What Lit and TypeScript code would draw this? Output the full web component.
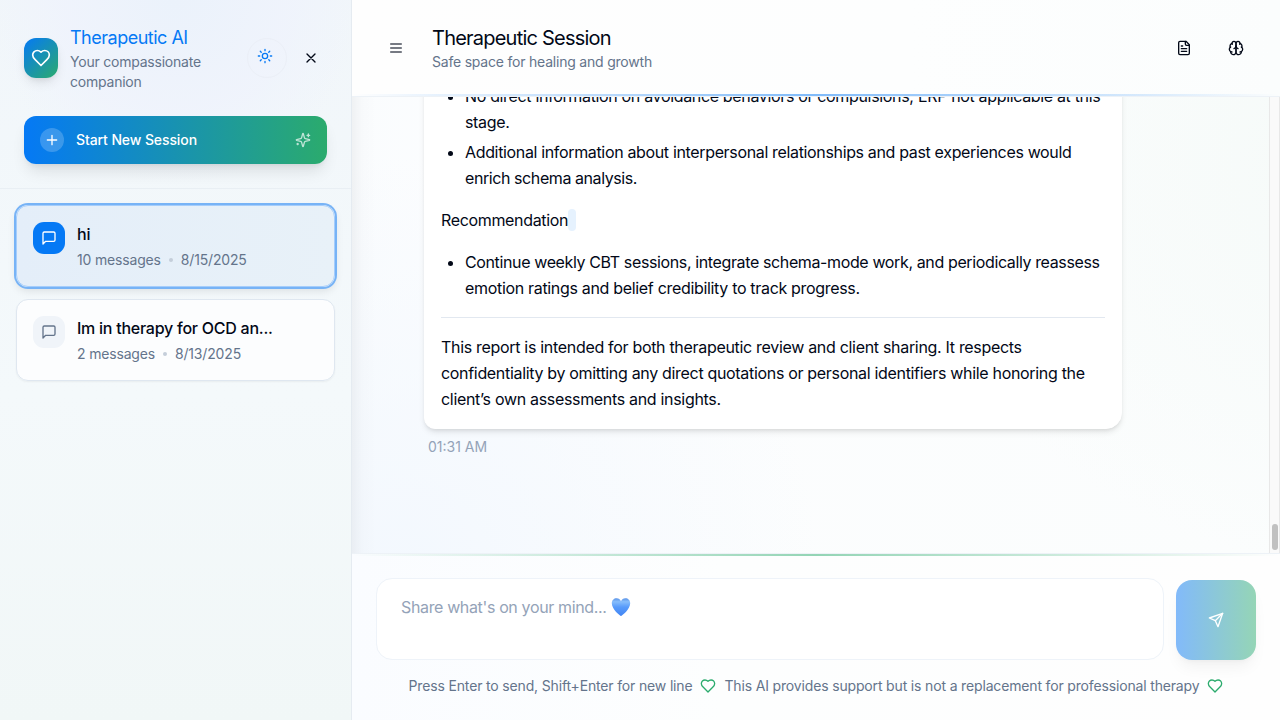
import { LitElement, html, css, svg } from "lit";
import { customElement, property } from "lit/decorators.js";
import { styleMap } from "lit/directives/style-map.js";

const ICONS: Record<string, unknown> = {
  heart: svg`<path d="M19 14c1.49-1.46 3-3.21 3-5.5A5.5 5.5 0 0 0 16.5 3c-1.76 0-3 .5-4.5 2-1.5-1.5-2.74-2-4.5-2A5.5 5.5 0 0 0 2 8.5c0 2.3 1.5 4.05 3 5.5l7 7Z"/>`,
  sun: svg`<circle cx="12" cy="12" r="4"/><path d="M12 2v2M12 20v2M4.93 4.93l1.41 1.41M17.66 17.66l1.41 1.41M2 12h2M20 12h2M6.34 17.66l-1.41 1.41M19.07 4.93l-1.41 1.41"/>`,
  x: svg`<path d="M18 6 6 18M6 6l12 12"/>`,
  plus: svg`<path d="M5 12h14M12 5v14"/>`,
  sparkles: svg`<path d="M9.937 15.5A2 2 0 0 0 8.5 14.063l-6.135-1.582a.5.5 0 0 1 0-.962L8.5 9.936A2 2 0 0 0 9.937 8.5l1.582-6.135a.5.5 0 0 1 .963 0L14.063 8.5A2 2 0 0 0 15.5 9.937l6.135 1.581a.5.5 0 0 1 0 .964L15.5 14.063a2 2 0 0 0-1.437 1.437l-1.582 6.135a.5.5 0 0 1-.963 0z"/><path d="M20 3v4M22 5h-4M4 17v2M5 18H3"/>`,
  message: svg`<path d="M21 15a2 2 0 0 1-2 2H7l-4 4V5a2 2 0 0 1 2-2h14a2 2 0 0 1 2 2z"/>`,
  menu: svg`<path d="M4 12h16M4 6h16M4 18h16"/>`,
  file: svg`<path d="M15 2H6a2 2 0 0 0-2 2v16a2 2 0 0 0 2 2h12a2 2 0 0 0 2-2V7Z"/><path d="M14 2v4a2 2 0 0 0 2 2h4M10 9H8M16 13H8M16 17H8"/>`,
  brain: svg`<path d="M12 5a3 3 0 1 0-5.997.125 4 4 0 0 0-2.526 5.77 4 4 0 0 0 .556 6.588A4 4 0 1 0 12 18Z"/><path d="M12 5a3 3 0 1 1 5.997.125 4 4 0 0 1 2.526 5.77 4 4 0 0 1-.556 6.588A4 4 0 1 1 12 18Z"/><path d="M15 13a4.5 4.5 0 0 1-3-4 4.5 4.5 0 0 1-3 4"/><path d="M17.599 6.5a3 3 0 0 0 .399-1.375M6.003 5.125A3 3 0 0 0 6.401 6.5M3.477 10.896a4 4 0 0 1 .585-.396M19.938 10.5a4 4 0 0 1 .585.396M6 18a4 4 0 0 1-1.967-.516M19.967 17.484A4 4 0 0 1 18 18"/>`,
  send: svg`<path d="m22 2-7 20-4-9-9-4Z"/><path d="M22 2 11 13"/>`,
};

@customElement("ui-icon")
class UiIcon extends LitElement {
  @property() name = "";
  static styles = css`
    :host { display: block; flex: none; width: 16px; height: 16px; }
    svg { display: block; width: 100%; height: 100%; fill: none; stroke: currentColor; stroke-width: 2; stroke-linecap: round; stroke-linejoin: round; }
  `;
  render() {
    return html`<svg viewBox="0 0 24 24">${ICONS[this.name]}</svg>`;
  }
}

const SESSIONS = [
  { title: "hi", count: "10 messages", date: "8/15/2025", active: true },
  { title: "Im in therapy for OCD an...", count: "2 messages", date: "8/13/2025", active: false },
];

@customElement("session-list")
class SessionList extends LitElement {
  static styles = css`
    :host { display: flex; flex-direction: column; gap: 12px; padding: 16px; }
    .card { display: flex; gap: 12px; padding: 16px; border: 1px solid #dfe7f0; border-radius: 12px; background: rgba(255, 255, 255, 0.7); box-shadow: 0 1px 2px rgba(0, 0, 0, 0.05); }
    .card.active { border-color: #a5cdfb; background: linear-gradient(90deg, #e4eef9, #e8f1f8); box-shadow: 0 0 0 2px #77b3f6, 0 4px 8px rgba(0, 0, 0, 0.1); }
    .badge { display: flex; align-items: center; justify-content: center; width: 32px; height: 32px; border-radius: 11px; background: #f0f4f9; color: #64748b; }
    .active .badge { background: #0579f5; color: #fff; }
    .title { font-size: 16px; line-height: 24px; font-weight: 500; color: #020817; white-space: nowrap; letter-spacing: -0.25px; }
    .meta { display: flex; align-items: center; gap: 8px; margin-top: 4px; font-size: 14px; line-height: 20px; color: #64748b; letter-spacing: -0.17px; }
    .dot { width: 4px; height: 4px; border-radius: 50%; background: #c5ceda; }
  `;
  render() {
    return SESSIONS.map(
      (s) => html`<div class="card ${s.active ? "active" : ""}">
        <div class="badge"><ui-icon name="message"></ui-icon></div>
        <div>
          <div class="title">${s.title}</div>
          <div class="meta"><span>${s.count}</span><i class="dot"></i><span>${s.date}</span></div>
        </div>
      </div>`,
    );
  }
}

// Each line of the report carries its own tracking, in hundredths of a pixel.
type Line = [text: string, tracking: number];

const NOTES: Line[][] = [
  [
    ["No direct information on avoidance behaviors or compulsions; ERP not applicable at this", -34],
    ["stage.", -34],
  ],
  [
    ["Additional information about interpersonal relationships and past experiences would", -34.5],
    ["enrich schema analysis.", -42],
  ],
];
const ADVICE: Line[] = [
  ["Continue weekly CBT sessions, integrate schema-mode work, and periodically reassess", -37.5],
  ["emotion ratings and belief credibility to track progress.", -32],
];
const CLOSING: Line[] = [
  ["This report is intended for both therapeutic review and client sharing. It respects", -31],
  ["confidentiality by omitting any direct quotations or personal identifiers while honoring the", -32],
  ["client’s own assessments and insights.", -32],
];

const lines = (ls: Line[]) =>
  ls.map(([text, t]) => html`<span class="line" style=${styleMap({ letterSpacing: `${t / 100}px` })}>${text}</span>`);

@customElement("app-root")
class AppRoot extends LitElement {
  static styles = css`
    :host { display: flex; width: 1280px; height: 720px; overflow: hidden; font-family: Inter, "Liberation Sans", sans-serif; color: #020817; background: #fcfefe; }
    * { box-sizing: border-box; }
    p, ul, h1, h2 { margin: 0; padding: 0; font-weight: 400; }
    .sidebar { display: flex; flex-direction: column; flex: none; width: 352px; border-right: 1px solid #e5ebf1; background: radial-gradient(circle at 175px 0, #ebf2fb, rgba(239, 243, 252, 0.9) 110px, rgba(241, 246, 250, 0) 185px), linear-gradient(180deg, #f1f6fa, #f4f9fb 55%, #f1f7f7); }
    .side-head { padding: 24px; border-bottom: 1px solid #e9eff4; }
    .brand { display: flex; align-items: center; height: 68px; }
    .logo { display: flex; align-items: center; justify-content: center; width: 34px; height: 40px; border-radius: 12px; color: #fff; background: linear-gradient(135deg, #0579f5, #2bab6d); box-shadow: 0 6px 12px -2px rgba(0, 0, 0, 0.1), 0 3px 6px -3px rgba(0, 0, 0, 0.1); }
    .logo ui-icon { width: 20px; height: 20px; }
    .brand-text { flex: 1; margin-left: 12px; }
    .name { font-size: 18px; line-height: 28px; color: #0579f5; letter-spacing: -0.5px; }
    .tag { font-size: 14px; line-height: 20px; color: #64748b; letter-spacing: -0.22px; }
    .theme { display: flex; align-items: center; justify-content: center; width: 40px; height: 40px; padding: 0 4px 4px 0; border: 1px solid #ebeff7; border-radius: 50%; color: #0579f5; }
    .close { display: flex; justify-content: center; width: 32px; margin-left: 8px; }
    .start { display: flex; align-items: center; gap: 12px; height: 48px; margin-top: 24px; padding: 0 16px; border-radius: 12px; color: #fff; font-size: 14px; font-weight: 500; background: linear-gradient(90deg, #0579f5, #2bab6d); box-shadow: 0 10px 15px -3px rgba(0, 0, 0, 0.1), 0 4px 6px -4px rgba(0, 0, 0, 0.1); }
    .start span { flex: 1; padding-bottom: 1px; letter-spacing: -0.1px; }
    .plus { display: flex; align-items: center; justify-content: center; width: 24px; height: 24px; border-radius: 50%; background: rgba(255, 255, 255, 0.2); }
    .spark { opacity: 0.7; }
    .main { display: flex; flex-direction: column; flex: 1; min-width: 0; }
    .top { position: relative; display: flex; align-items: center; height: 97px; padding: 0 36px 1px; border-bottom: 1px solid #edf2f7; background: linear-gradient(90deg, #fefefe, #fdfefe 60%, #fbfdfd); }
    .top::after { content: ""; position: absolute; left: 0; right: 0; bottom: 0; height: 2px; background: linear-gradient(90deg, rgba(5, 121, 245, 0), rgba(5, 121, 245, 0.5), rgba(5, 121, 245, 0)); }
    .menu { color: #4a4f5b; }
    .heading { flex: 1; margin-left: 28px; }
    .heading h1 { font-size: 20px; line-height: 28px; letter-spacing: -0.78px; }
    .heading p { font-size: 14px; line-height: 20px; color: #64748b; letter-spacing: -0.21px; }
    .actions { display: flex; gap: 36px; }
    .body { display: flex; flex: 1; min-height: 0; background: linear-gradient(90deg, rgba(0, 0, 0, 0.045), rgba(0, 0, 0, 0.012) 10px, rgba(0, 0, 0, 0) 24px), radial-gradient(ellipse 420px 420px at 5% 105%, #f3f8fe, rgba(247, 251, 255, 0)), radial-gradient(ellipse 520px 420px at 1060px 60px, #f5faf8, rgba(250, 253, 252, 0)), linear-gradient(90deg, #fafcfe, #fcfdfe 12%, #fbfdfd); }
    .scroll { display: flex; flex-direction: column; justify-content: flex-end; flex: 1; overflow: hidden; padding: 0 72px 96px; }
    .bubble { width: 698px; padding: 16px; border: 1px solid #fff; border-radius: 16px 16px 16px 11px; background: #fff; box-shadow: 0 4px 6px -1px rgba(0, 0, 0, 0.1), 0 2px 4px -2px rgba(0, 0, 0, 0.1); font-size: 16px; line-height: 26px; white-space: nowrap; }
    .bubble ul { padding-left: 24px; margin-bottom: 16px; }
    .bubble li + li { margin-top: 4px; }
    .line { display: block; }
    .rec { display: flex; align-items: center; margin-bottom: 16px; letter-spacing: -0.34px; }
    .code { width: 8px; height: 22px; border-radius: 4px; background: #e6f2fe; }
    .rule { height: 1px; margin-bottom: 16px; background: #e2e8f0; }
    .time { margin: 8px 0 0 4px; font-size: 14px; line-height: 20px; color: #94a3b8; }
    .bar { display: flex; flex-direction: column; justify-content: flex-end; width: 11px; padding: 0 2px 3px; border: solid #e8e8e8; border-width: 0 1px; background: #fafafa; }
    .thumb { height: 26px; width: 6px; border-radius: 3px; background: #c1c1c1; }
    .foot { position: relative; height: 167px; padding: 24px 24px 0; border-top: 1px solid #edf2f7; background: linear-gradient(90deg, #fafcff, #fdfefe 40%, #fefefe); }
    .foot::before { content: ""; position: absolute; left: 0; right: 0; top: 0; height: 2px; background: linear-gradient(90deg, rgba(43, 171, 109, 0), rgba(43, 171, 109, 0.5), rgba(43, 171, 109, 0)); }
    .compose { display: flex; align-items: flex-end; gap: 12px; }
    .input { display: flex; align-items: flex-start; flex: 1; height: 82px; padding: 16px 24px; border: 1px solid #eef3f9; border-radius: 16px; background: #fff; color: #94a3b8; font-size: 16px; line-height: 24px; letter-spacing: -0.36px; }
    .blue-heart { width: 20px; height: 20px; margin: 2px 0 0 4px; }
    .send { display: flex; align-items: center; justify-content: center; width: 80px; height: 80px; border-radius: 16px; color: #fff; background: linear-gradient(90deg, #82bafa, #95d5b6); box-shadow: 0 10px 15px -3px rgba(0, 0, 0, 0.05), 0 4px 6px -4px rgba(0, 0, 0, 0.05); }
    .hint { display: flex; align-items: center; justify-content: center; gap: 8px; margin-top: 16px; font-size: 14px; line-height: 20px; color: #64748b; white-space: nowrap; letter-spacing: -0.16px; }
    .hint ui-icon { color: #2bab6d; }
  `;

  render() {
    return html`
      <aside class="sidebar">
        <div class="side-head">
          <div class="brand">
            <div class="logo"><ui-icon name="heart"></ui-icon></div>
            <div class="brand-text">
              <h2 class="name">Therapeutic AI</h2>
              <p class="tag">Your compassionate<br />companion</p>
            </div>
            <div class="theme"><ui-icon name="sun"></ui-icon></div>
            <div class="close"><ui-icon name="x"></ui-icon></div>
          </div>
          <div class="start">
            <div class="plus"><ui-icon name="plus"></ui-icon></div>
            <span>Start New Session</span>
            <ui-icon class="spark" name="sparkles"></ui-icon>
          </div>
        </div>
        <session-list></session-list>
      </aside>
      <main class="main">
        <header class="top">
          <ui-icon class="menu" name="menu"></ui-icon>
          <div class="heading">
            <h1>Therapeutic Session</h1>
            <p>Safe space for healing and growth</p>
          </div>
          <div class="actions"><ui-icon name="file"></ui-icon><ui-icon name="brain"></ui-icon></div>
        </header>
        <section class="body">
          <div class="scroll">
            <div class="bubble">
              <ul>
                ${NOTES.map((n) => html`<li>${lines(n)}</li>`)}
              </ul>
              <p class="rec">Recommendation<i class="code"></i></p>
              <ul>
                <li>${lines(ADVICE)}</li>
              </ul>
              <div class="rule"></div>
              <p>${lines(CLOSING)}</p>
            </div>
            <div class="time">01:31 AM</div>
          </div>
          <div class="bar"><div class="thumb"></div></div>
        </section>
        <footer class="foot">
          <div class="compose">
            <div class="input">
              <span>Share what's on your mind...</span>
              <svg class="blue-heart" viewBox="0 0 20 20">
                <defs>
                  <linearGradient id="hg" x1="0" y1="0" x2="0" y2="1">
                    <stop offset="0" stop-color="#5a93e8" />
                    <stop offset="0.2" stop-color="#86bdfb" />
                    <stop offset="0.5" stop-color="#579bfb" />
                    <stop offset="1" stop-color="#4285f3" />
                  </linearGradient>
                </defs>
                <path fill="url(#hg)" d="M10 19C9.200 19 .8 12.500 .8 6.300.8 3.200 3 1.200 5.600 1.200 7.600 1.200 9.200 2.300 10 4.200c.8-1.900 2.400-3 4.400-3 2.600 0 4.800 2 4.800 5.100C19.200 12.500 10.800 19 10 19Z" />
              </svg>
            </div>
            <div class="send"><ui-icon name="send"></ui-icon></div>
          </div>
          <div class="hint">
            <span>Press Enter to send, Shift+Enter for new line</span>
            <ui-icon name="heart"></ui-icon>
            <span>This AI provides support but is not a replacement for professional therapy</span>
            <ui-icon name="heart"></ui-icon>
          </div>
        </footer>
      </main>
    `;
  }
}
